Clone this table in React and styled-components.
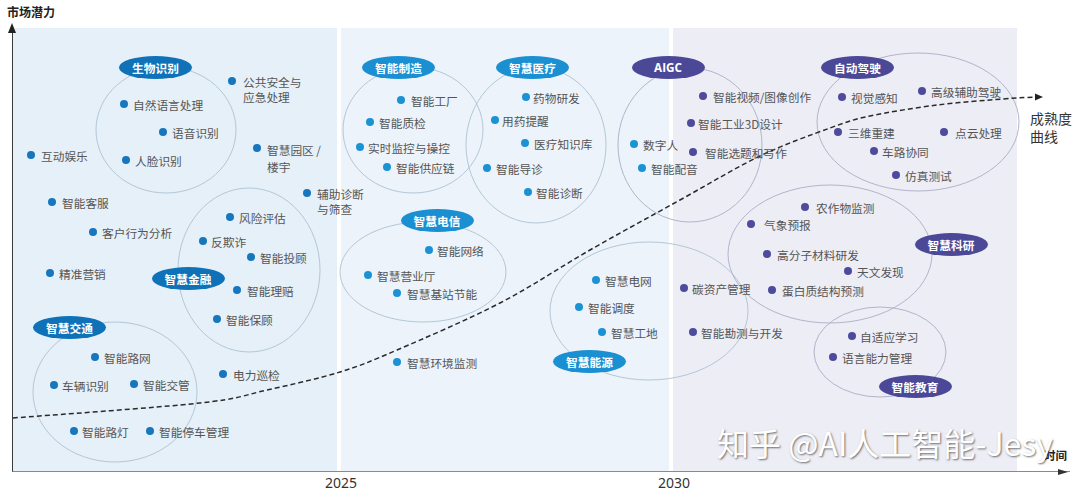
import React from 'react';
import styled, { createGlobalStyle } from 'styled-components';

const GlobalStyle = createGlobalStyle`
  html, body { margin: 0; padding: 0; background: #fff; }
  body { font-family: "Noto Sans CJK SC", "Noto Sans", sans-serif; }
`;

const BLUE1 = '#1676be';
const BLUE2 = '#1b92d4';
const PURPLE = '#4e4b9c';
const BADGE1 = '#0f72b9';
const BADGE2 = '#1a8fd2';
const BADGEP = '#4b4898';

const dotColor = (x) => (x < 338 ? BLUE1 : x < 672 ? BLUE2 : PURPLE);

const circles = [
  { cx: 166, cy: 130, rx: 70, ry: 63, p: false },
  { cx: 249, cy: 270, rx: 71, ry: 82, p: false },
  { cx: 115, cy: 392, rx: 82, ry: 70, p: false },
  { cx: 413, cy: 130, rx: 70, ry: 63, p: false },
  { cx: 536, cy: 145, rx: 70, ry: 78, p: false },
  { cx: 423, cy: 272, rx: 83, ry: 50, p: false },
  { cx: 690, cy: 145, rx: 72, ry: 77, p: true },
  { cx: 649, cy: 311, rx: 99, ry: 69, p: false },
  { cx: 918, cy: 122, rx: 101, ry: 69, p: true },
  { cx: 830, cy: 254, rx: 102, ry: 69, p: true },
  { cx: 880, cy: 352, rx: 66, ry: 45, p: true },
];

const badges = [
  { x: 155.5, y: 67, t: '生物识别', c: BADGE1 },
  { x: 398.5, y: 67, t: '智能制造', c: BADGE2 },
  { x: 532.5, y: 67, t: '智慧医疗', c: BADGE2 },
  { x: 668, y: 67, t: 'AIGC', c: BADGEP },
  { x: 857.5, y: 67, t: '自动驾驶', c: BADGEP },
  { x: 437, y: 220, t: '智慧电信', c: BADGE2 },
  { x: 188, y: 278, t: '智慧金融', c: BADGE1 },
  { x: 69.5, y: 327, t: '智慧交通', c: BADGE1 },
  { x: 589.5, y: 361, t: '智慧能源', c: BADGE2 },
  { x: 951, y: 244, t: '智慧科研', c: BADGEP },
  { x: 915, y: 386, t: '智能教育', c: BADGEP },
];

// [dotX, dotY, lines, textOffset(from dot center), lineHeight]
const items = [
  [232, 81, ['公共安全与', '应急处理'], 11],
  [124, 104, ['自然语言处理'], 9],
  [163, 132, ['语音识别'], 9],
  [31, 155, ['互动娱乐'], 10],
  [126, 160, ['人脸识别'], 9],
  [257, 148, ['智慧园区 /', '楼宇'], 10, 17],
  [307, 193, ['辅助诊断', '与筛查'], 10],
  [52, 202, ['智能客服'], 10],
  [230, 217, ['风险评估'], 9],
  [93, 232, ['客户行为分析'], 9],
  [203, 241, ['反欺诈'], 8],
  [251, 257, ['智能投顾'], 9],
  [50, 273, ['精准营销'], 9],
  [237, 290, ['智能理赔'], 10],
  [217, 319, ['智能保顾'], 9],
  [95, 357, ['智能路网'], 9],
  [223, 374, ['电力巡检'], 10],
  [54, 385, ['车辆识别'], 8],
  [134, 384, ['智能交管'], 9],
  [74, 431, ['智能路灯'], 8],
  [150, 431, ['智能停车管理'], 9],
  [401, 100, ['智能工厂'], 10],
  [370, 122, ['智能质检'], 9],
  [360, 147, ['实时监控与操控'], 8],
  [387, 167, ['智能供应链'], 9],
  [526, 97, ['药物研发'], 7],
  [495, 120, ['用药提醒'], 7],
  [525, 143, ['医疗知识库'], 9],
  [487, 168, ['智能导诊'], 9],
  [528, 192, ['智能诊断'], 8],
  [634, 144, ['数字人'], 9],
  [642, 168, ['智能配音'], 9],
  [429, 250, ['智能网络'], 8],
  [368, 275, ['智慧营业厅'], 9],
  [397, 293, ['智慧基站节能'], 10],
  [397, 362, ['智慧环境监测'], 10],
  [596, 280, ['智慧电网'], 9],
  [579, 307, ['智能调度'], 9],
  [602, 332, ['智慧工地'], 9],
  [703, 96, ['智能视频/图像创作'], 10],
  [691, 123, ['智能工业3D设计'], 7],
  [693, 152, ['智能选题和写作'], 12],
  [842, 97, ['视觉感知'], 9],
  [922, 91, ['高级辅助驾驶'], 9],
  [838, 132, ['三维重建'], 10],
  [944, 132, ['点云处理'], 11],
  [874, 151, ['车路协同'], 8],
  [896, 175, ['仿真测试'], 9],
  [805, 207, ['农作物监测'], 11],
  [751, 224, ['气象预报'], 13],
  [767, 254, ['高分子材料研发'], 10],
  [848, 271, ['天文发现'], 9],
  [684, 288, ['碳资产管理'], 8],
  [772, 290, ['蛋白质结构预测'], 10],
  [693, 332, ['智能勘测与开发'], 8],
  [852, 336, ['自适应学习'], 8],
  [833, 357, ['语言能力管理'], 9],
];

const curvePts = [
  [13, 418], [200, 403], [267, 390], [340, 372], [397, 350], [500, 303],
  [590, 250], [680, 200], [760, 156], [830, 128], [870, 116], [937, 105],
  [1003, 99], [1036, 97],
];

function smoothPath(pts) {
  let d = `M${pts[0][0]},${pts[0][1]}`;
  for (let i = 0; i < pts.length - 1; i++) {
    const p0 = pts[i - 1] || pts[i];
    const p1 = pts[i];
    const p2 = pts[i + 1];
    const p3 = pts[i + 2] || p2;
    const c1x = p1[0] + (p2[0] - p0[0]) / 6;
    const c1y = p1[1] + (p2[1] - p0[1]) / 6;
    const c2x = p2[0] - (p3[0] - p1[0]) / 6;
    const c2y = p2[1] - (p3[1] - p1[1]) / 6;
    d += ` C${c1x.toFixed(1)},${c1y.toFixed(1)} ${c2x.toFixed(1)},${c2y.toFixed(1)} ${p2[0]},${p2[1]}`;
  }
  return d;
}
const curveD = smoothPath(curvePts);

const Page = styled.div`
  position: relative;
  width: 1080px;
  height: 492px;
  overflow: hidden;
  background: #fff;
  font-family: "Noto Sans CJK SC", "Noto Sans", sans-serif;
`;

const Header = styled.div`
  height: 28px;
  box-sizing: border-box;
  padding: 4px 0 0 7px;
`;

const AxisTitle = styled.div`
  font-size: 12px;
  line-height: 16px;
  font-weight: 700;
  color: #222;
`;

const PlotRow = styled.div`
  position: relative;
  display: flex;
  gap: 4px;
  margin-left: 12px;
  width: 1058px;
  height: 444px;
  box-sizing: border-box;
  border-left: 1px solid #3a3a3a;
  border-bottom: 1px solid #8a8a8a;
`;

const Panel = styled.div`
  flex: none;
  width: ${(p) => p.$w}px;
  height: 100%;
  background: ${(p) => p.$bg};
`;

const SideColumn = styled.div`
  flex: 1;
  min-width: 0;
  display: flex;
  flex-direction: column;
  padding: 81px 0 9px 9px;
  white-space: nowrap;
`;

const CurveLabel = styled.div`
  font-size: 14px;
  line-height: 18px;
  color: #333;
`;

const TimeLabel = styled.div`
  margin-top: auto;
  margin-left: 14px;
  font-size: 11.5px;
  line-height: 14px;
  font-weight: 700;
  color: #222;
`;

const YArrow = styled.span`
  position: absolute;
  top: -5px;
  left: -5px;
  width: 0;
  height: 0;
  border-left: 4px solid transparent;
  border-right: 4px solid transparent;
  border-bottom: 10px solid #222;
`;

const XArrow = styled.span`
  position: absolute;
  right: 2px;
  bottom: -4px;
  width: 0;
  height: 0;
  border-top: 3.5px solid transparent;
  border-bottom: 3.5px solid transparent;
  border-left: 10px solid #333;
`;

const YearRow = styled.div`
  display: flex;
  gap: 269px;
  padding-left: 309px;
  padding-top: 2px;
`;

const Year = styled.div`
  width: 64px;
  text-align: center;
  font-family: "Noto Sans", "Open Sans", sans-serif;
  font-size: 14px;
  line-height: 18px;
  color: #333;
`;

const Overlay = styled.div`
  position: absolute;
  inset: 0;
  pointer-events: none;
`;

const Drawing = styled.svg`
  position: absolute;
  left: 0;
  top: 0;
`;

const Badge = styled.div`
  position: absolute;
  left: ${(p) => p.$x - 36.5}px;
  top: ${(p) => p.$y - 11.5}px;
  width: 73px;
  height: 23px;
  border-radius: 50%;
  background: ${(p) => p.$c};
  color: #fff;
  font-weight: 700;
  font-size: 11.7px;
  display: flex;
  align-items: center;
  justify-content: center;
  font-family: ${(p) => (p.$latin ? '"Open Sans", "Noto Sans", sans-serif' : '"Noto Sans CJK SC", sans-serif')};
`;

const Item = styled.div`
  position: absolute;
  left: ${(p) => p.$x - 4}px;
  top: ${(p) => p.$y - 7.5}px;
  display: flex;
  align-items: flex-start;
  white-space: nowrap;
`;

const Dot = styled.span`
  flex: none;
  width: 8px;
  height: 8px;
  margin-top: 3.5px;
  border-radius: 50%;
  background: ${(p) => p.$c};
`;

const ItemText = styled.span`
  margin-left: ${(p) => p.$gap}px;
  font-size: 11.7px;
  line-height: ${(p) => p.$lh}px;
  color: #555;
`;

const Watermark = styled.div`
  position: absolute;
  left: 717px;
  top: 422px;
  font-size: 32px;
  line-height: 40px;
  color: #fff;
  white-space: nowrap;
  text-shadow: 1px 1px 2px rgba(0, 0, 0, 0.55);
  font-family: "Noto Sans CJK SC", sans-serif;
`;

export default function App() {
  return (
    <Page>
      <GlobalStyle />
      <Header>
        <AxisTitle>市场潜力</AxisTitle>
      </Header>
      <PlotRow>
        <YArrow />
        <Panel $w={324} $bg="#e6f0f8" />
        <Panel $w={328} $bg="#ecf3fa" />
        <Panel $w={344} $bg="#ededf5" />
        <SideColumn>
          <CurveLabel>
            成熟度
            <br />
            曲线
          </CurveLabel>
          <TimeLabel>时间</TimeLabel>
        </SideColumn>
        <XArrow />
      </PlotRow>
      <YearRow>
        <Year>2025</Year>
        <Year>2030</Year>
      </YearRow>
      <Overlay>
        <Drawing width="1080" height="492" viewBox="0 0 1080 492">
          {circles.map((c, i) => (
            <ellipse
              key={i}
              cx={c.cx}
              cy={c.cy}
              rx={c.rx}
              ry={c.ry}
              fill="none"
              stroke={c.p ? '#b4b3cb' : '#b3c7d7'}
              strokeWidth="1"
            />
          ))}
          <path d={curveD} fill="none" stroke="#2a2a2a" strokeWidth="1.5" strokeDasharray="5 3" />
          <polygon points="1035,93.5 1043,97 1035,100.5" fill="#222" />
        </Drawing>
        {badges.map((b) => (
          <Badge key={b.t} $x={b.x} $y={b.y} $c={b.c} $latin={b.t === 'AIGC'}>
            {b.t}
          </Badge>
        ))}
        {items.map(([x, y, lines, off, lh]) => (
          <Item key={lines.join('')} $x={x} $y={y}>
            <Dot $c={dotColor(x)} />
            <ItemText $gap={off - 4} $lh={lh || 15}>
              {lines.map((l, i) => (
                <React.Fragment key={i}>
                  {i > 0 && <br />}
                  {l}
                </React.Fragment>
              ))}
            </ItemText>
          </Item>
        ))}
        <Watermark>知乎 @AI人工智能-Jesy</Watermark>
      </Overlay>
    </Page>
  );
}
